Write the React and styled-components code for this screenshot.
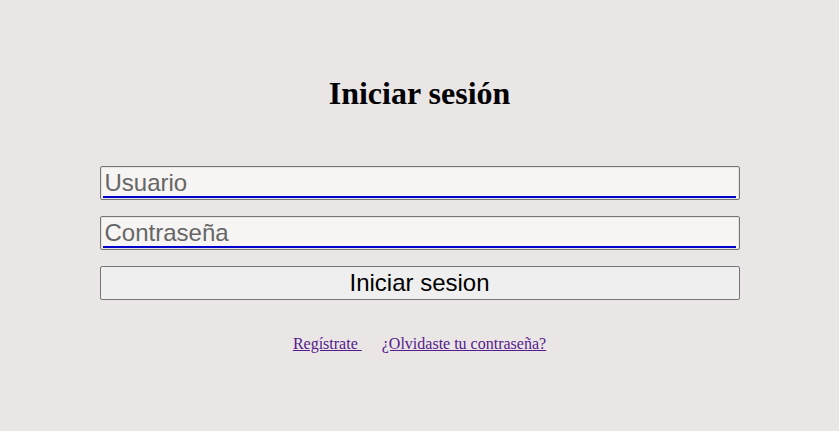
import React from "react";
import styled, { createGlobalStyle } from "styled-components";

const Global = createGlobalStyle`
  html, body { margin: 0; padding: 0; background: #eae6e5; }
  body { font-family: "Liberation Serif", "Times New Roman", serif; }
`;

const Page = styled.main`
  display: flex;
  flex-direction: column;
  align-items: center;
  padding-top: 75px;
`;

const Title = styled.h1`
  margin: 0;
  font-family: "Liberation Serif", serif;
  font-size: 32px;
  font-weight: bold;
  line-height: 36px;
  color: #000;
`;

const Form = styled.form`
  display: flex;
  flex-direction: column;
  gap: 16px;
  width: 640px;
  margin-top: 55px;
`;

const Input = styled.input`
  box-sizing: border-box;
  width: 100%;
  height: 34px;
  margin: 0;
  padding: 0 4px;
  border: 1px solid #767676;
  border-radius: 2px;
  box-shadow: inset 0 0 0 1px #e6e4e2;
  background: linear-gradient(#0000cc, #0000cc) no-repeat 2px calc(100% - 1px) / calc(100% - 5px) 2px, #f6f5f3;
  font-family: "Liberation Sans", Arial, sans-serif;
  font-size: 24px;
  color: #222;
  outline: none;
  &::placeholder { color: #666; opacity: 1; }
`;

const Button = styled.button`
  box-sizing: border-box;
  width: 100%;
  height: 34px;
  margin: 0;
  padding: 0;
  border: 1px solid #767676;
  border-radius: 2px;
  background: #efefef;
  font-family: "Liberation Sans", Arial, sans-serif;
  font-size: 24px;
  color: #000;
`;

const Links = styled.nav`
  display: flex;
  justify-content: center;
  gap: 20px;
  margin-top: 35px;
  font-family: "Liberation Serif", serif;
  font-size: 16px;
`;

const Link = styled.a`
  color: #551a8b;
  text-decoration: underline;
`;

export default function App() {
  return (
    <>
      <Global />
      <Page>
        <Title>Iniciar sesión</Title>
        <Form onSubmit={(e) => e.preventDefault()}>
          <Input type="text" placeholder="Usuario" />
          <Input type="password" placeholder="Contraseña" />
          <Button type="submit">Iniciar sesion</Button>
        </Form>
        <Links>
          <Link href="#">Regístrate&nbsp;</Link>
          <Link href="#">¿Olvidaste tu contraseña?</Link>
        </Links>
      </Page>
    </>
  );
}
